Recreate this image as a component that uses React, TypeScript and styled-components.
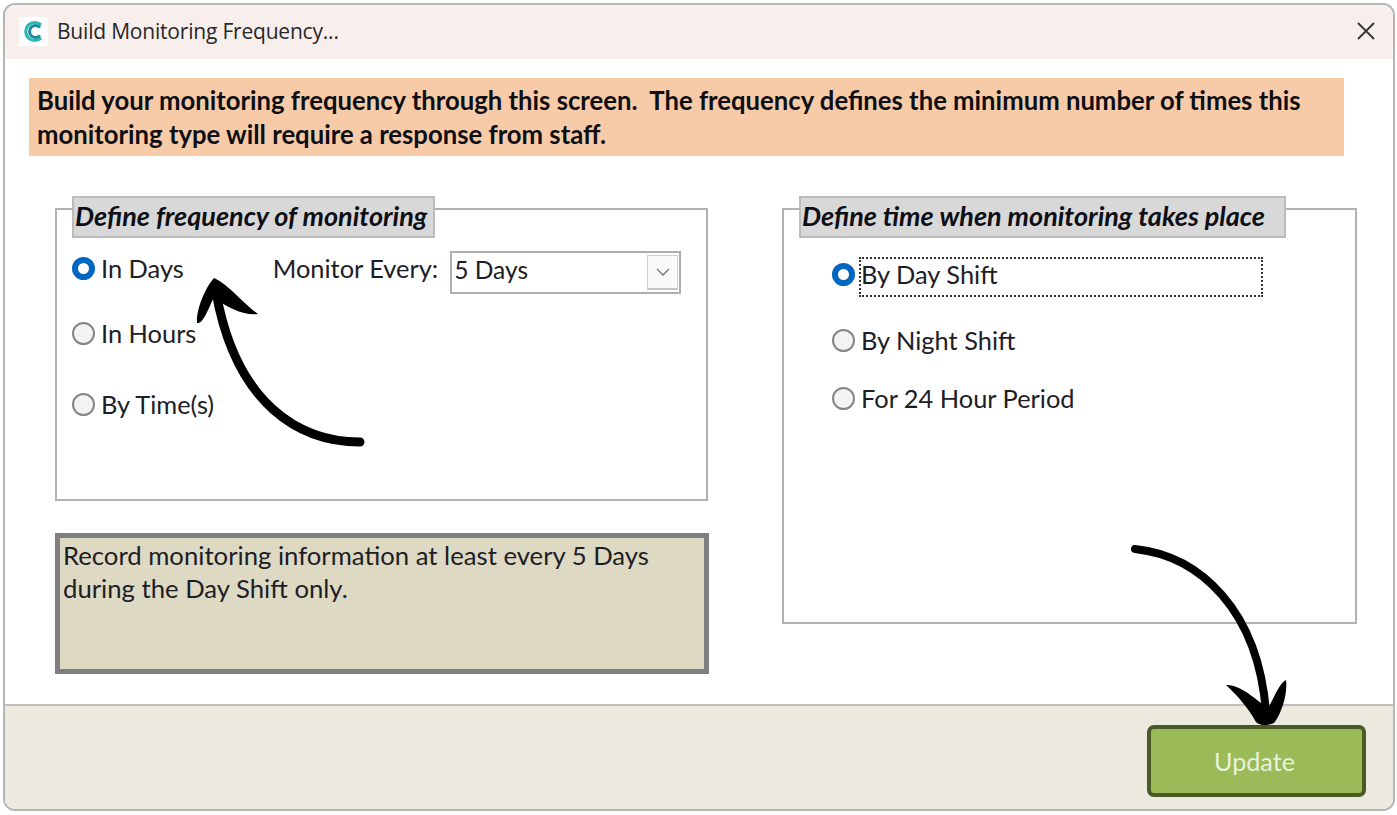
import React from "react";
import styled, { createGlobalStyle } from "styled-components";

const Global = createGlobalStyle`
  html, body { margin: 0; padding: 0; background: #fff; }
  body { font-family: Lato, "Open Sans", sans-serif; color: #14171c; }
  * { box-sizing: border-box; }
`;

const Page = styled.div`
  position: relative;
  width: 1397px;
  height: 815px;
  padding: 3px 2px 4px 3px;
  overflow: hidden;
`;

const Window = styled.div`
  width: 100%;
  height: 100%;
  display: flex;
  flex-direction: column;
  border: 2px solid #b4b6b6;
  border-radius: 12px;
  overflow: hidden;
  background: #fff;
`;

const TitleBar = styled.header`
  height: 54px;
  flex: none;
  display: flex;
  align-items: center;
  padding: 0 17px 2px 14px;
  background: #f8eeec;
`;

const AppIcon = styled.svg`
  width: 29px;
  height: 29px;
  flex: none;
  margin-right: 9px;
  background: #fff;
`;

const TitleText = styled.span`
  flex: 1;
  font-family: "Open Sans", sans-serif;
  font-size: 21px;
  letter-spacing: -0.2px;
  color: #26282a;
`;

const CloseIcon = styled.svg`
  width: 20px;
  height: 20px;
  flex: none;
`;

const Body = styled.main`
  flex: 1;
  padding: 19px 0 0 24px;
  min-height: 0;
`;

const Banner = styled.div`
  width: 1315px;
  height: 78px;
  padding: 5px 8px;
  background: #f8cba8;
  font-size: 25.7px;
  font-weight: 700;
  line-height: 34px;
  white-space: nowrap;
  color: #0d0f14;
`;

const Columns = styled.div`
  display: flex;
  align-items: flex-start;
  padding: 40px 0 0 26px;
  gap: 73px;
`;

const LeftColumn = styled.div`
  width: 654px;
  display: flex;
  flex-direction: column;
  gap: 32px;
`;

const Group = styled.section<{ $w: number; $h: number }>`
  position: relative;
  width: ${(p) => p.$w}px;
  height: ${(p) => p.$h}px;
  margin-top: 12px;
  border: 2px solid #b2b2b2;
`;

const Legend = styled.h2<{ $w: number }>`
  position: absolute;
  left: 15px;
  top: -14px;
  width: ${(p) => p.$w}px;
  height: 42px;
  margin: 0;
  padding: 0 1px 4px;
  display: flex;
  align-items: center;
  background: #d8d8d8;
  border: 2px solid #bcbcbc;
  font-size: 27px;
  font-weight: 700;
  font-style: italic;
  white-space: nowrap;
  color: #0d0f14;
`;

const FrequencyBody = styled.div`
  padding: 35px 0 0 15px;
  display: flex;
  flex-direction: column;
`;

const ShiftBody = styled.div`
  padding: 41px 0 0 48px;
  display: flex;
  flex-direction: column;
`;

const Row = styled.div<{ $mt?: number }>`
  display: flex;
  align-items: center;
  height: 46px;
  margin-top: ${(p) => p.$mt ?? 0}px;
`;

const Radio = styled.span<{ $on?: boolean }>`
  width: 23px;
  height: 23px;
  flex: none;
  border-radius: 50%;
  background: ${(p) => (p.$on ? "#fff" : "#f3f3f3")};
  border: ${(p) => (p.$on ? "6.5px solid #0067c0" : "2px solid #858585")};
  margin-right: 6px;
`;

const Label = styled.span`
  font-size: 25.4px;
  white-space: nowrap;
  color: #1c2026;
`;

const FocusLabel = styled(Label)`
  width: 404px;
  height: 40px;
  margin: 6px 0 0 -2px;
  padding: 0 0 6px 2px;
  display: flex;
  align-items: center;
  outline: 2px dotted #333;
  outline-offset: -2px;
`;

const MonitorLabel = styled(Label)`
  margin-left: 89px;
  margin-right: 12px;
`;

const Select = styled.div`
  width: 231px;
  height: 43px;
  margin-top: 8px;
  display: flex;
  align-items: center;
  justify-content: space-between;
  padding-left: 2px;
  border: 2px solid #aeaeae;
  background: #fff;
  font-size: 24.6px;
  line-height: 30px;
  color: #1c2026;
`;

const SelectValue = styled.span`
  margin-bottom: 4px;
`;

const SelectButton = styled.span`
  width: 31px;
  height: 35px;
  margin-right: 1px;
  display: flex;
  align-items: center;
  justify-content: center;
  background: #fafafa;
  border: 1px solid #cfcfcf;
  border-bottom: 2px solid #c4c4c4;
`;

const InfoBox = styled.div`
  height: 141px;
  padding: 1px 3px;
  background: #ded9c3;
  border: 5px solid #7f7f7f;
  font-size: 25.7px;
  line-height: 33px;
  white-space: nowrap;
  color: #1c2026;
`;

const Footer = styled.footer`
  height: 105px;
  flex: none;
  display: flex;
  align-items: flex-start;
  justify-content: flex-end;
  padding: 19px 27px 0 0;
  background: #ece9de;
  border-top: 2px solid #c0c0c0;
`;

const UpdateButton = styled.button`
  width: 219px;
  height: 72px;
  padding: 0 4px 0 0;
  border: 4px solid #4a5a26;
  border-radius: 7px;
  background: #9bbb59;
  color: #e6f2dc;
  font-family: Lato, sans-serif;
  font-size: 25.2px;
`;

const Arrow = styled.svg<{ $x: number; $y: number }>`
  position: absolute;
  left: ${(p) => p.$x}px;
  top: ${(p) => p.$y}px;
  pointer-events: none;
`;

export default function App() {
  return (
    <Page>
      <Global />
      <Window>
        <TitleBar>
          <AppIcon viewBox="0 0 29 29">
            <path d="M22 8 A9 9 0 1 0 22 21" fill="none" stroke="#2bb8b4" strokeWidth="3.2" />
            <path d="M21 10.5 A6 6 0 1 0 21 18.5" fill="none" stroke="#1f8a9c" strokeWidth="3" />
          </AppIcon>
          <TitleText>Build Monitoring Frequency...</TitleText>
          <CloseIcon viewBox="0 0 20 20">
            <path d="M2 2 L18 18 M18 2 L2 18" stroke="#333" strokeWidth="1.8" fill="none" />
          </CloseIcon>
        </TitleBar>
        <Body>
          <Banner>
            Build your monitoring frequency through this screen.&nbsp; The frequency defines the minimum number of times this
            <br />
            monitoring type will require a response from staff.
          </Banner>
          <Columns>
            <LeftColumn>
              <Group $w={653} $h={293}>
                <Legend $w={363}>Define frequency of monitoring</Legend>
                <FrequencyBody>
                  <Row>
                    <Radio $on />
                    <Label>In Days</Label>
                    <MonitorLabel>Monitor Every:</MonitorLabel>
                    <Select>
                      <SelectValue>5 Days</SelectValue>
                      <SelectButton>
                        <svg width="16" height="10" viewBox="0 0 16 10">
                          <path d="M2 2 L8 8 L14 2" fill="none" stroke="#777" strokeWidth="1.4" />
                        </svg>
                      </SelectButton>
                    </Select>
                  </Row>
                  <Row $mt={19}>
                    <Radio />
                    <Label>In Hours</Label>
                  </Row>
                  <Row $mt={25}>
                    <Radio />
                    <Label>By Time(s)</Label>
                  </Row>
                </FrequencyBody>
              </Group>
              <InfoBox>
                Record monitoring information at least every 5 Days
                <br />
                during the Day Shift only.
              </InfoBox>
            </LeftColumn>
            <Group $w={575} $h={416}>
              <Legend $w={487}>Define time when monitoring takes place</Legend>
              <ShiftBody>
                <Row>
                  <Radio $on />
                  <FocusLabel>By Day Shift</FocusLabel>
                </Row>
                <Row $mt={20}>
                  <Radio />
                  <Label>By Night Shift</Label>
                </Row>
                <Row $mt={12}>
                  <Radio />
                  <Label>For 24 Hour Period</Label>
                </Row>
              </ShiftBody>
            </Group>
          </Columns>
        </Body>
        <Footer>
          <UpdateButton>Update</UpdateButton>
        </Footer>
      </Window>
      <Arrow $x={190} $y={270} width={180} height={185} viewBox="190 270 180 185">
        <path d="M360 442 C 300 442 236 405 216 292" fill="none" stroke="#000" strokeWidth="9" strokeLinecap="round" />
        <path d="M214 278 C 205 288 196 310 197 323 C 203 324 207 312 214 297 C 226 308 246 316 258 314 C 246 306 228 284 214 278 Z" fill="#000" />
      </Arrow>
      <Arrow $x={1125} $y={540} width={170} height={190} viewBox="1125 540 170 190">
        <path d="M1135 549 C 1200 556 1258 610 1266 712" fill="none" stroke="#000" strokeWidth="8" strokeLinecap="round" />
        <path d="M1226 685 C 1240 684 1256 700 1268 708 C 1274 698 1280 682 1286 680 C 1288 696 1280 716 1274 723 C 1268 726 1260 726 1256 722 C 1248 708 1238 696 1226 685 Z" fill="#000" />
      </Arrow>
    </Page>
  );
}
